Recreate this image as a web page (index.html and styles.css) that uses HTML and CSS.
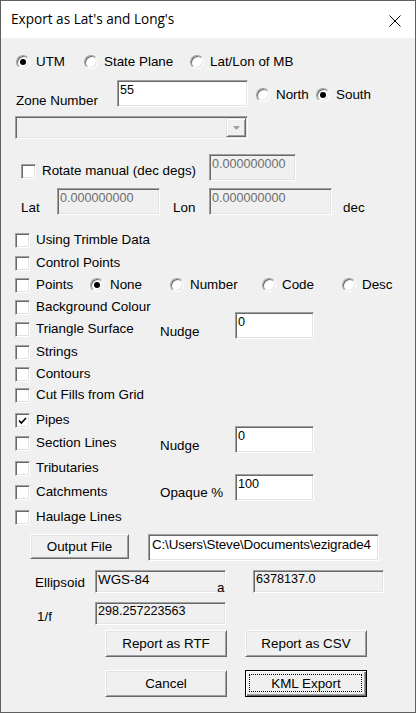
FILE: index.html
```html
<!DOCTYPE html>
<html>
<head>
<meta charset="utf-8">
<title>Export as Lat's and Long's</title>
<link rel="stylesheet" href="styles.css">
</head>
<body>
<div class="window">
  <div class="titlebar">
    <span class="title">Export as Lat's and Long's</span>
    <svg class="close" width="12" height="12" viewBox="0 0 12 12"><path d="M0.5 0.5 L11.5 11.5 M11.5 0.5 L0.5 11.5" stroke="#000" stroke-width="1" fill="none"/></svg>
  </div>
  <div class="client">
    <div class="row row-coord">
      <label class="radio w68"><span class="rb on"></span>UTM</label>
      <label class="radio w106"><span class="rb"></span>State Plane</label>
      <label class="radio"><span class="rb"></span>Lat/Lon of MB</label>
    </div>

    <div class="row row-zone">
      <span class="lbl zone-lbl">Zone Number</span>
      <div class="edit zone-edit">55</div>
      <label class="radio ns w60"><span class="rb"></span>North</label>
      <label class="radio ns"><span class="rb on"></span>South</label>
    </div>

    <div class="row row-combo">
      <div class="combo"><div class="combo-btn"><svg width="7" height="4" viewBox="0 0 7 4"><path d="M0 0 H7 L3.5 4 Z" fill="#a0a0a0"/></svg></div></div>
    </div>

    <div class="row row-rotate">
      <label class="check w188 rot-check"><span class="cb"></span>Rotate manual (dec degs)</label>
      <div class="edit disabled num rot-edit">0.000000000</div>
    </div>

    <div class="row row-lat">
      <span class="lbl w36 mt12">Lat</span>
      <div class="edit disabled num lat-edit">0.000000000</div>
      <span class="lbl w36 mt12 lon-lbl">Lon</span>
      <div class="edit disabled num lon-edit">0.000000000</div>
      <span class="lbl mt12 dec-lbl">dec</span>
    </div>

    <div class="checks">
      <div class="crow h23"><label class="check"><span class="cb"></span>Using Trimble Data</label></div>
      <div class="crow h22"><label class="check"><span class="cb"></span>Control Points</label></div>
      <div class="crow h22">
        <label class="check w75"><span class="cb"></span>Points</label>
        <label class="radio w80"><span class="rb on"></span>None</label>
        <label class="radio w92"><span class="rb"></span>Number</label>
        <label class="radio w80"><span class="rb"></span>Code</label>
        <label class="radio"><span class="rb"></span>Desc</label>
      </div>
      <div class="crow h22"><label class="check"><span class="cb"></span>Background Colour</label></div>
      <div class="crow h23">
        <label class="check w145"><span class="cb"></span>Triangle Surface</label>
        <span class="lbl w75 mt3">Nudge</span>
        <div class="edit side-edit mtm9">0</div>
      </div>
      <div class="crow h22"><label class="check"><span class="cb"></span>Strings</label></div>
      <div class="crow h21"><label class="check"><span class="cb"></span>Contours</label></div>
      <div class="crow h25"><label class="check"><span class="cb"></span>Cut Fills from Grid</label></div>
      <div class="crow h23"><label class="check"><span class="cb on"><svg width="9" height="8" viewBox="0 0 9 8"><path d="M1 3.5 L3.3 6 L8 1" stroke="#000" stroke-width="1.7" fill="none"/></svg></span>Pipes</label></div>
      <div class="crow h25">
        <label class="check w145"><span class="cb"></span>Section Lines</label>
        <span class="lbl w75 mt3">Nudge</span>
        <div class="edit side-edit mtm9">0</div>
      </div>
      <div class="crow h24"><label class="check"><span class="cb"></span>Tributaries</label></div>
      <div class="crow h25">
        <label class="check w145"><span class="cb"></span>Catchments</label>
        <span class="lbl w75 mt1">Opaque %</span>
        <div class="edit side-edit mtm10">100</div>
      </div>
      <div class="crow h25"><label class="check"><span class="cb"></span>Haulage Lines</label></div>
    </div>

    <div class="row row-output">
      <button class="btn out-btn">Output File</button>
      <div class="edit path-edit">C:\Users\Steve\Documents\ezigrade4</div>
    </div>

    <div class="row row-ellip">
      <span class="lbl ellip-lbl">Ellipsoid</span>
      <div class="field-wrap">
        <div class="edit static wgs">WGS-84</div>
        <span class="a-lbl">a</span>
      </div>
      <div class="edit static num a-field">6378137.0</div>
    </div>

    <div class="row row-f">
      <span class="lbl f-lbl">1/f</span>
      <div class="edit static num f-field">298.257223563</div>
    </div>

    <div class="row row-btn1">
      <button class="btn big">Report as RTF</button>
      <button class="btn big">Report as CSV</button>
    </div>
    <div class="row row-btn2">
      <button class="btn big">Cancel</button>
      <button class="btn big default">KML Export</button>
    </div>
  </div>
</div>
</body>
</html>
```

FILE: styles.css
```css
* { box-sizing: border-box; }

body {
  margin: 0;
  font-family: "Liberation Sans", Arial, sans-serif;
  font-size: 13.4px;
  line-height: 16px;
  color: #000;
  background: #f0f0f0;
}

.window {
  width: 416px;
  height: 713px;
  border: 1px solid #5f5f5f;
  background: #f0f0f0;
  display: flex;
  flex-direction: column;
  overflow: hidden;
}

.titlebar {
  flex: none;
  height: 37px;
  background: #fff;
  display: flex;
  align-items: center;
  justify-content: space-between;
  padding: 0 14px 0 10px;
}

.title {
  font-family: "Open Sans", "Noto Sans", sans-serif;
  font-size: 13.6px;
  color: #000;
  margin-top: -1px;
}

.close { display: block; margin-top: 2px; }

.client { flex: 1; }

.row { display: flex; align-items: flex-start; }

/* generic labels */
.lbl { flex: none; white-space: nowrap; }
.w36 { width: 36px; }
.w60 { width: 60px; }
.w68 { width: 68px; }
.w75 { width: 75px; }
.w80 { width: 80px; }
.w92 { width: 92px; }
.w106 { width: 106px; }
.w145 { width: 145px; }
.w188 { width: 188px; }
.mt1 { margin-top: 1px; }
.mt3 { margin-top: 3px; }
.mt12 { margin-top: 12px; }
.mtm9 { margin-top: -9px; }
.mtm10 { margin-top: -10px; }

/* radio buttons */
.radio {
  flex: none;
  display: flex;
  align-items: center;
  height: 16px;
  white-space: nowrap;
}
.rb {
  flex: none;
  position: relative;
  width: 14px;
  height: 14px;
  margin-right: 6px;
  border-radius: 50%;
  background: #fff;
  border: 1px solid;
  border-color: #a0a0a0 #ffffff #ffffff #a0a0a0;
  box-shadow: inset 1px 1px 0 #696969, inset -1px -1px 0 #e3e3e3;
}
.rb.on::after {
  content: "";
  position: absolute;
  left: 3px;
  top: 3px;
  width: 6px;
  height: 6px;
  border-radius: 50%;
  background: #000;
}

/* check boxes */
.check {
  flex: none;
  display: flex;
  align-items: flex-start;
  white-space: nowrap;
}
.cb {
  flex: none;
  width: 15px;
  height: 15px;
  margin-top: 1px;
  margin-right: 6px;
  background: #fff;
  border: 1px solid;
  border-color: #a0a0a0 #ffffff #ffffff #a0a0a0;
  box-shadow: inset 1px 1px 0 #696969, inset -1px -1px 0 #e3e3e3;
  display: flex;
  align-items: center;
  justify-content: center;
}
.cb svg { display: block; margin-top: 1px; }

/* edits */
.edit {
  flex: none;
  height: 27px;
  background: #fff;
  border: 1px solid;
  border-color: #a0a0a0 #ffffff #ffffff #a0a0a0;
  box-shadow: inset 1px 1px 0 #696969, inset -1px -1px 0 #e3e3e3;
  padding: 2px 2px 0 2px;
  line-height: 15px;
  white-space: nowrap;
  overflow: hidden;
}
.edit.num, .side-edit, .zone-edit { font-size: 12.6px; }
.edit.disabled { background: #f0f0f0; color: #6d6d6d; }
.edit.static { background: #f0f0f0; height: 23px; padding-top: 1px; }

/* row: coordinate system */
.row-coord { margin-top: 16px; height: 16px; padding-left: 15px; }

/* row: zone */
.row-zone { margin-top: 10px; height: 27px; padding-left: 15px; }
.zone-lbl { width: 101px; margin-top: 13px; }
.zone-edit { width: 131px; }
.radio.ns { margin-top: 7px; }
.zone-edit + .radio { margin-left: 8px; }

/* row: combo */
.row-combo { margin-top: 9px; height: 23px; padding-left: 14px; }
.combo {
  width: 233px;
  height: 23px;
  background: #f0f0f0;
  border: 1px solid;
  border-color: #a0a0a0 #ffffff #ffffff #a0a0a0;
  box-shadow: inset 1px 1px 0 #696969, inset -1px -1px 0 #e3e3e3;
  padding: 1px;
  display: flex;
  justify-content: flex-end;
}
.combo-btn {
  width: 20px;
  height: 19px;
  background: #f0f0f0;
  border: 1px solid;
  border-color: #e3e3e3 #696969 #696969 #e3e3e3;
  box-shadow: inset 1px 1px 0 #fff, inset -1px -1px 0 #a0a0a0;
  display: flex;
  align-items: center;
  justify-content: center;
}
.combo-btn svg { display: block; }

/* row: rotate */
.row-rotate { margin-top: 15px; height: 27px; padding-left: 20px; }
.rot-check { margin-top: 9px; }
.rot-edit { width: 87px; }

/* row: lat / lon */
.row-lat { margin-top: 7px; height: 27px; padding-left: 20px; }
.lat-edit { width: 103px; }
.lon-lbl { margin-left: 13px; }
.lon-edit { width: 123px; }
.dec-lbl { margin-left: 11px; }

/* checkbox list */
.checks { margin-top: 17px; }
.crow { display: flex; align-items: flex-start; padding-left: 14px; }
.h21 { height: 21px; }
.h22 { height: 22px; }
.h23 { height: 23px; }
.h24 { height: 24px; }
.h25 { height: 25px; }
.side-edit { width: 79px; }

/* buttons */
.btn {
  flex: none;
  position: relative;
  font-family: "Liberation Sans", Arial, sans-serif;
  font-size: 13.4px;
  color: #000;
  background: #f0f0f0;
  border: 1px solid;
  border-color: #ffffff #696969 #696969 #ffffff;
  box-shadow: inset 1px 1px 0 #e3e3e3, inset -1px -1px 0 #a0a0a0;
  padding: 0;
  margin: 0;
  line-height: 16px;
}
.btn.default {
  border: 1px solid #000;
  box-shadow: inset 1px 1px 0 #fff, inset -1px -1px 0 #696969, inset -2px -2px 0 #a0a0a0;
}
.btn.default::after {
  content: "";
  position: absolute;
  left: 3px;
  top: 3px;
  right: 4px;
  bottom: 4px;
  border: 1px dotted #000;
}

/* row: output */
.row-output { height: 27px; padding-left: 29px; }
.out-btn { width: 99px; height: 25px; }
.path-edit { margin-left: 19px; width: 231px; padding-left: 3px; letter-spacing: -0.15px; }

/* row: ellipsoid */
.row-ellip { margin-top: 9px; height: 23px; padding-left: 34px; }
.ellip-lbl { width: 60px; margin-top: 5px; }
.field-wrap { position: relative; flex: none; width: 131px; height: 23px; }
.wgs { width: 131px; }
.a-lbl {
  position: absolute;
  right: 0;
  bottom: 0;
  width: 10px;
  height: 9px;
  line-height: 8px;
  background: #f0f0f0;
  padding-left: 1px;
}
.a-field { margin-left: 27px; width: 131px; }

/* row: 1/f */
.row-f { margin-top: 9px; height: 23px; padding-left: 36px; }
.f-lbl { width: 58px; margin-top: 7px; }
.f-field { width: 131px; }

/* bottom buttons */
.row-btn1 { margin-top: 5px; padding-left: 104px; gap: 18px; }
.row-btn2 { margin-top: 13px; padding-left: 104px; gap: 18px; }
.big { width: 122px; height: 27px; }
```
